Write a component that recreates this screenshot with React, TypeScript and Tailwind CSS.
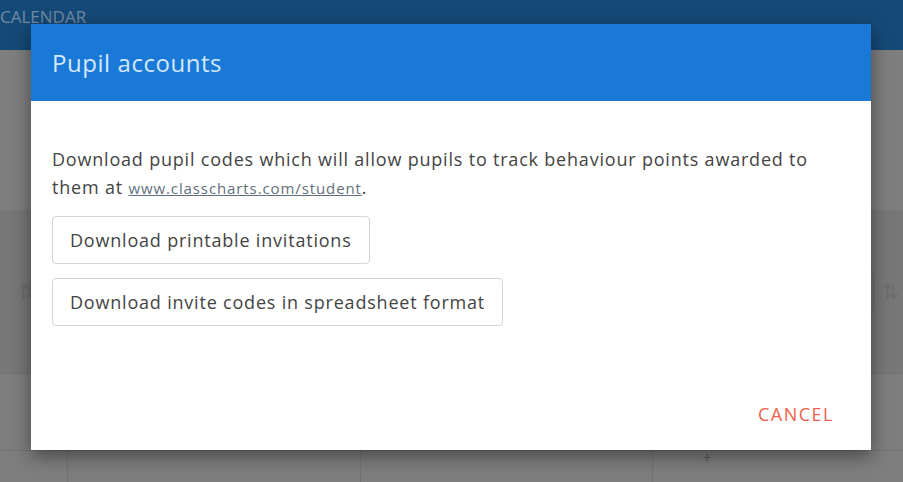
import React from "react";

const font = { fontFamily: '"Open Sans", "Noto Sans", sans-serif' };

function Backdrop() {
  return (
    <div className="flex h-[482px] w-[903px] flex-col overflow-hidden bg-[#7c7c7c]" style={font}>
      <div className="flex h-[50px] shrink-0 items-start bg-[#154a78] pt-[4px]">
        <span className="text-[17px] text-[#6f8aa5]">CALENDAR</span>
      </div>
      <div className="h-[160px] shrink-0 bg-[#7e7e7e]" />
      <div className="flex h-[163px] shrink-0 items-center justify-between border-t border-[#777] bg-[#777777] pl-[18px] pr-[4px]">
        <span className="text-[20px] text-[#6c6c6c]">⇅</span>
        <div className="flex items-center gap-[8px]">
          <div className="h-[44px] w-[40px] rounded-[4px] border border-[#6a6a6a]" />
          <span className="text-[20px] text-[#6c6c6c]">⇅</span>
        </div>
      </div>
      <div className="grid h-[77px] shrink-0 grid-cols-[68px_293px_292px_1fr] border-t border-[#747474] bg-[#7e7e7e]">
        <div className="border-r border-[#737373]" />
        <div className="border-r border-[#737373]" />
        <div className="border-r border-[#737373]" />
        <div />
      </div>
      <div className="grid flex-1 grid-cols-[68px_293px_292px_1fr] border-t border-[#737373] bg-[#7e7e7e]">
        <div className="border-r border-[#737373]" />
        <div className="border-r border-[#737373]" />
        <div className="border-r border-[#737373]" />
        <div className="pl-[50px] text-[14px] leading-none text-[#555]">+</div>
      </div>
    </div>
  );
}

export default function App() {
  return (
    <div className="relative h-[482px] w-[903px] overflow-hidden" style={font}>
      <Backdrop />
      <div className="absolute left-[31px] top-[24px] flex h-[426px] w-[840px] flex-col bg-white shadow-[0_6px_18px_rgba(0,0,0,0.45)]">
        <div className="flex h-[77px] shrink-0 items-center bg-[#1a78d6] px-[21px]">
          <h2 className="text-[24px] font-normal tracking-[0.55px] text-[#d3e8fc]">Pupil accounts</h2>
        </div>
        <div className="flex flex-1 flex-col px-[21px] pt-[44px]">
          <p className="text-[18px] leading-[28px] tracking-[0.8px] text-[#444]">
            Download pupil codes which will allow pupils to track behaviour points awarded to them at{" "}
            <a href="#" className="text-[15px] tracking-[0.9px] text-[#5f6f7e] underline">
              www.classcharts.com/student
            </a>
            .
          </p>
          <div className="mt-[14px] flex flex-col items-start gap-[14px]">
            <button className="h-[48px] rounded-[4px] border border-[#d4d4d4] bg-white px-[17px] text-[18px] tracking-[0.8px] text-[#444]">
              Download printable invitations
            </button>
            <button className="h-[48px] rounded-[4px] border border-[#d4d4d4] bg-white px-[17px] text-[18px] tracking-[0.8px] text-[#444]">
              Download invite codes in spreadsheet format
            </button>
          </div>
          <div className="mt-auto flex justify-end pb-[22px] pr-[16px]">
            <button className="text-[18px] tracking-[1.5px] text-[#f0604a]">CANCEL</button>
          </div>
        </div>
      </div>
    </div>
  );
}
